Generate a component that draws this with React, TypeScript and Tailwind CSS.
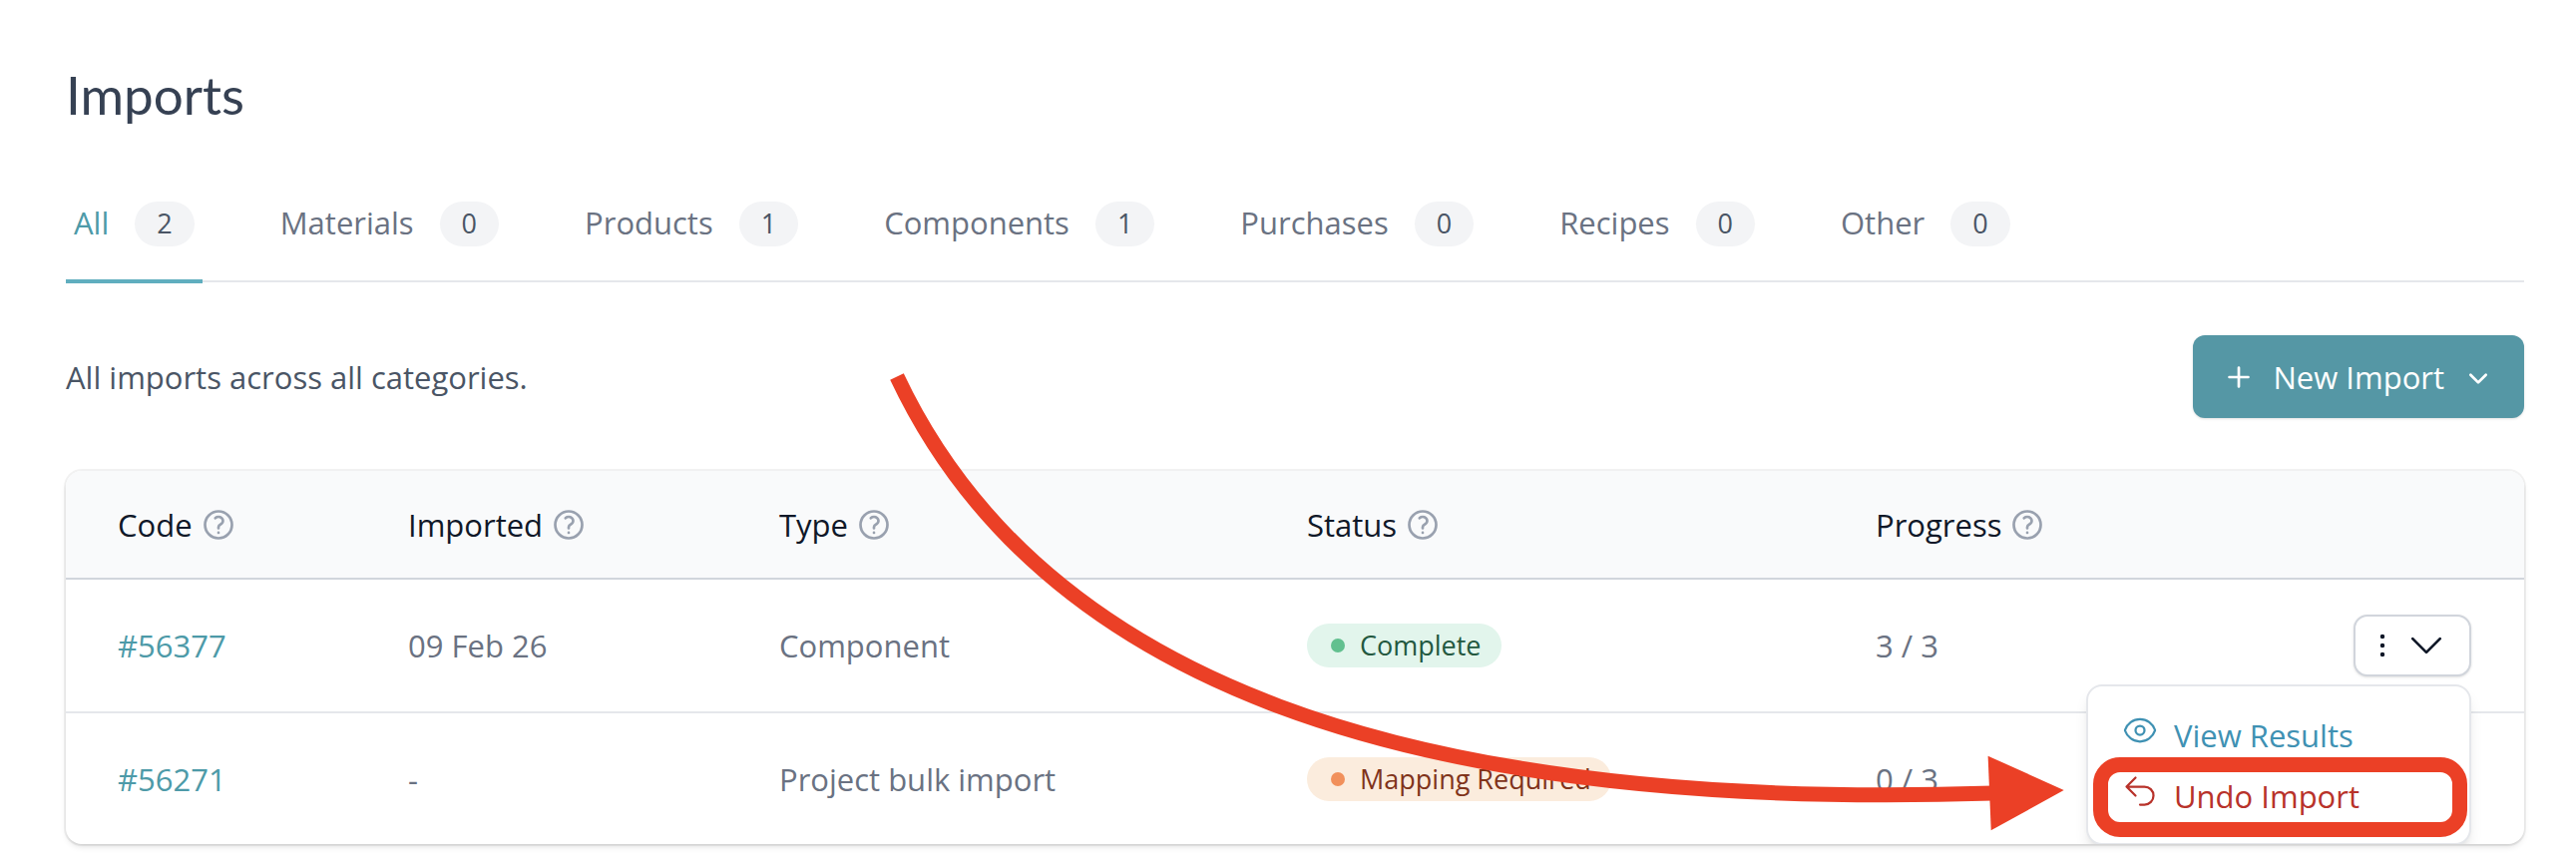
import type { ReactNode } from "react";
import {
  HiMiniChevronDown,
  HiMiniPlus,
  HiOutlineArrowUturnLeft,
  HiOutlineChevronDown,
  HiOutlineEllipsisVertical,
  HiOutlineEye,
  HiOutlineQuestionMarkCircle,
} from "react-icons/hi2";

const tabs = [
  { name: "All", count: 2, active: true },
  { name: "Materials", count: 0 },
  { name: "Products", count: 1 },
  { name: "Components", count: 1 },
  { name: "Purchases", count: 0 },
  { name: "Recipes", count: 0 },
  { name: "Other", count: 0 },
];

const columns = [
  { name: "Code", cell: "w-[317px] pl-[52px]" },
  { name: "Imported", cell: "w-[372px] pl-[26px]" },
  { name: "Type", cell: "w-[529px] pl-[26px]" },
  { name: "Status", cell: "w-[570px] pl-[26px]" },
  { name: "Progress", cell: "pl-[26px]" },
];

function StatusPill({ tone, children }: { tone: "green" | "orange"; children: ReactNode }) {
  const green = tone === "green";
  return (
    <span
      className={`flex h-11 w-fit items-center gap-[15px] rounded-full pr-5 pl-6 text-[27px] leading-9 ${
        green ? "bg-[#e2f5ec] text-[#23583f]" : "bg-[#fbecdd] text-[#80331a]"
      }`}
    >
      <span className={`size-[14px] rounded-full ${green ? "bg-[#62c08f]" : "bg-[#f1905b]"}`} />
      {children}
    </span>
  );
}

function ActionsMenu() {
  return (
    <div className="relative inline-block align-middle">
      <button
        type="button"
        aria-label="Row actions"
        aria-expanded="true"
        className="flex h-[62px] w-[118px] items-center gap-1 rounded-[14px] border-2 border-gray-300 bg-white pl-[9px] text-gray-900 shadow-sm"
      >
        <HiOutlineEllipsisVertical className="size-9" />
        <HiOutlineChevronDown className="size-11" />
      </button>
      <ul className="absolute top-full right-0 z-10 mt-2 h-[161px] w-[386px] rounded-2xl border-2 border-gray-200 bg-white px-[34px] pt-[18px] text-left shadow-lg">
        <li className="h-[61px]">
          <a href="#results" className="flex gap-4 py-2 text-[#3f91b3]">
            <HiOutlineEye className="size-9" />
            <span className="pt-px">View Results</span>
          </a>
        </li>
        <li className="relative h-[61px]">
          <button type="button" className="flex gap-4 py-2 text-[#b8322a]">
            <HiOutlineArrowUturnLeft className="size-9" />
            <span className="pt-px">Undo Import</span>
          </button>
          <span className="pointer-events-none absolute -top-2 -right-8 -left-[29px] h-20 rounded-[27px] border-[15px] border-[#eb4026]" />
        </li>
      </ul>
    </div>
  );
}

function Pointer() {
  return (
    <svg
      aria-hidden="true"
      className="pointer-events-none absolute top-0 left-0 z-20"
      width="2100"
      height="860"
      viewBox="0 0 2100 860"
      fill="none"
    >
      <path d="M899 377.5C1043 683 1410 814 1998 795" stroke="#eb4026" strokeWidth="15" />
      <path d="M1992.6 757.7 2068.7 792 1995.7 832.3Z" fill="#eb4026" />
    </svg>
  );
}

export default function App() {
  return (
    <main className="relative min-h-screen bg-white pt-16 pr-[52px] pb-[18px] pl-[66px] font-['Open_Sans',sans-serif] text-[31px] leading-11 text-gray-500">
      <h1 className="font-['Lato',sans-serif] text-[53px] leading-[62px] text-gray-700">Imports</h1>

      <nav className="mt-14 flex gap-[70px] border-b-2 border-gray-200">
        {tabs.map((tab) => (
          <a
            key={tab.name}
            href={`#${tab.name.toLowerCase()}`}
            className={`-mb-[3px] flex h-[102px] items-center gap-[26px] border-b-4 px-2 pb-[14px] ${
              tab.active ? "border-[#60aebf] text-[#4d9aa8]" : "border-transparent"
            }`}
          >
            <span className="pb-[3px]">{tab.name}</span>
            <span className="flex h-[45px] items-center rounded-full bg-gray-100 px-[22px] text-[27px] leading-9 text-gray-600">
              {tab.count}
            </span>
          </a>
        ))}
      </nav>

      <div className="mt-[53px] flex items-center justify-between">
        <p className="text-gray-600">All imports across all categories.</p>
        <button
          type="button"
          className="flex h-[83px] items-center gap-4 rounded-xl bg-[#5597a5] px-7 font-medium text-white shadow-sm"
        >
          <HiMiniPlus className="size-9" />
          New Import
          <HiMiniChevronDown className="size-9" />
        </button>
      </div>

      <div className="mt-[53px] overflow-hidden rounded-2xl shadow-md ring-2 ring-black/5">
        <table className="w-full table-fixed text-left">
          <thead className="bg-gray-50">
            <tr className="h-[108px] border-b-2 border-gray-300">
              {columns.map((column) => (
                <th key={column.name} className={`font-medium text-gray-900 ${column.cell}`}>
                  <span className="flex items-center gap-2">
                    {column.name}
                    <HiOutlineQuestionMarkCircle className="size-9 stroke-[1.8] text-gray-400" />
                  </span>
                </th>
              ))}
              <th className="w-[360px]" aria-label="Actions" />
            </tr>
          </thead>
          <tbody>
            <tr className="h-[134px] border-b-2 border-gray-200">
              <td className="pl-[52px]">
                <a href="#56377" className="text-[#4d9aa8]">#56377</a>
              </td>
              <td className="pl-[26px]">09 Feb 26</td>
              <td className="pl-[26px]">Component</td>
              <td className="pl-[26px]">
                <StatusPill tone="green">Complete</StatusPill>
              </td>
              <td className="pl-[26px]">3 / 3</td>
              <td className="pr-[53px] text-right">
                <ActionsMenu />
              </td>
            </tr>
            <tr className="h-[132px]">
              <td className="pl-[52px]">
                <a href="#56271" className="text-[#4d9aa8]">#56271</a>
              </td>
              <td className="pl-[26px]">-</td>
              <td className="pl-[26px]">Project bulk import</td>
              <td className="pl-[26px]">
                <StatusPill tone="orange">Mapping Required</StatusPill>
              </td>
              <td className="pl-[26px]">0 / 3</td>
              <td />
            </tr>
          </tbody>
        </table>
      </div>

      <Pointer />
    </main>
  );
}
